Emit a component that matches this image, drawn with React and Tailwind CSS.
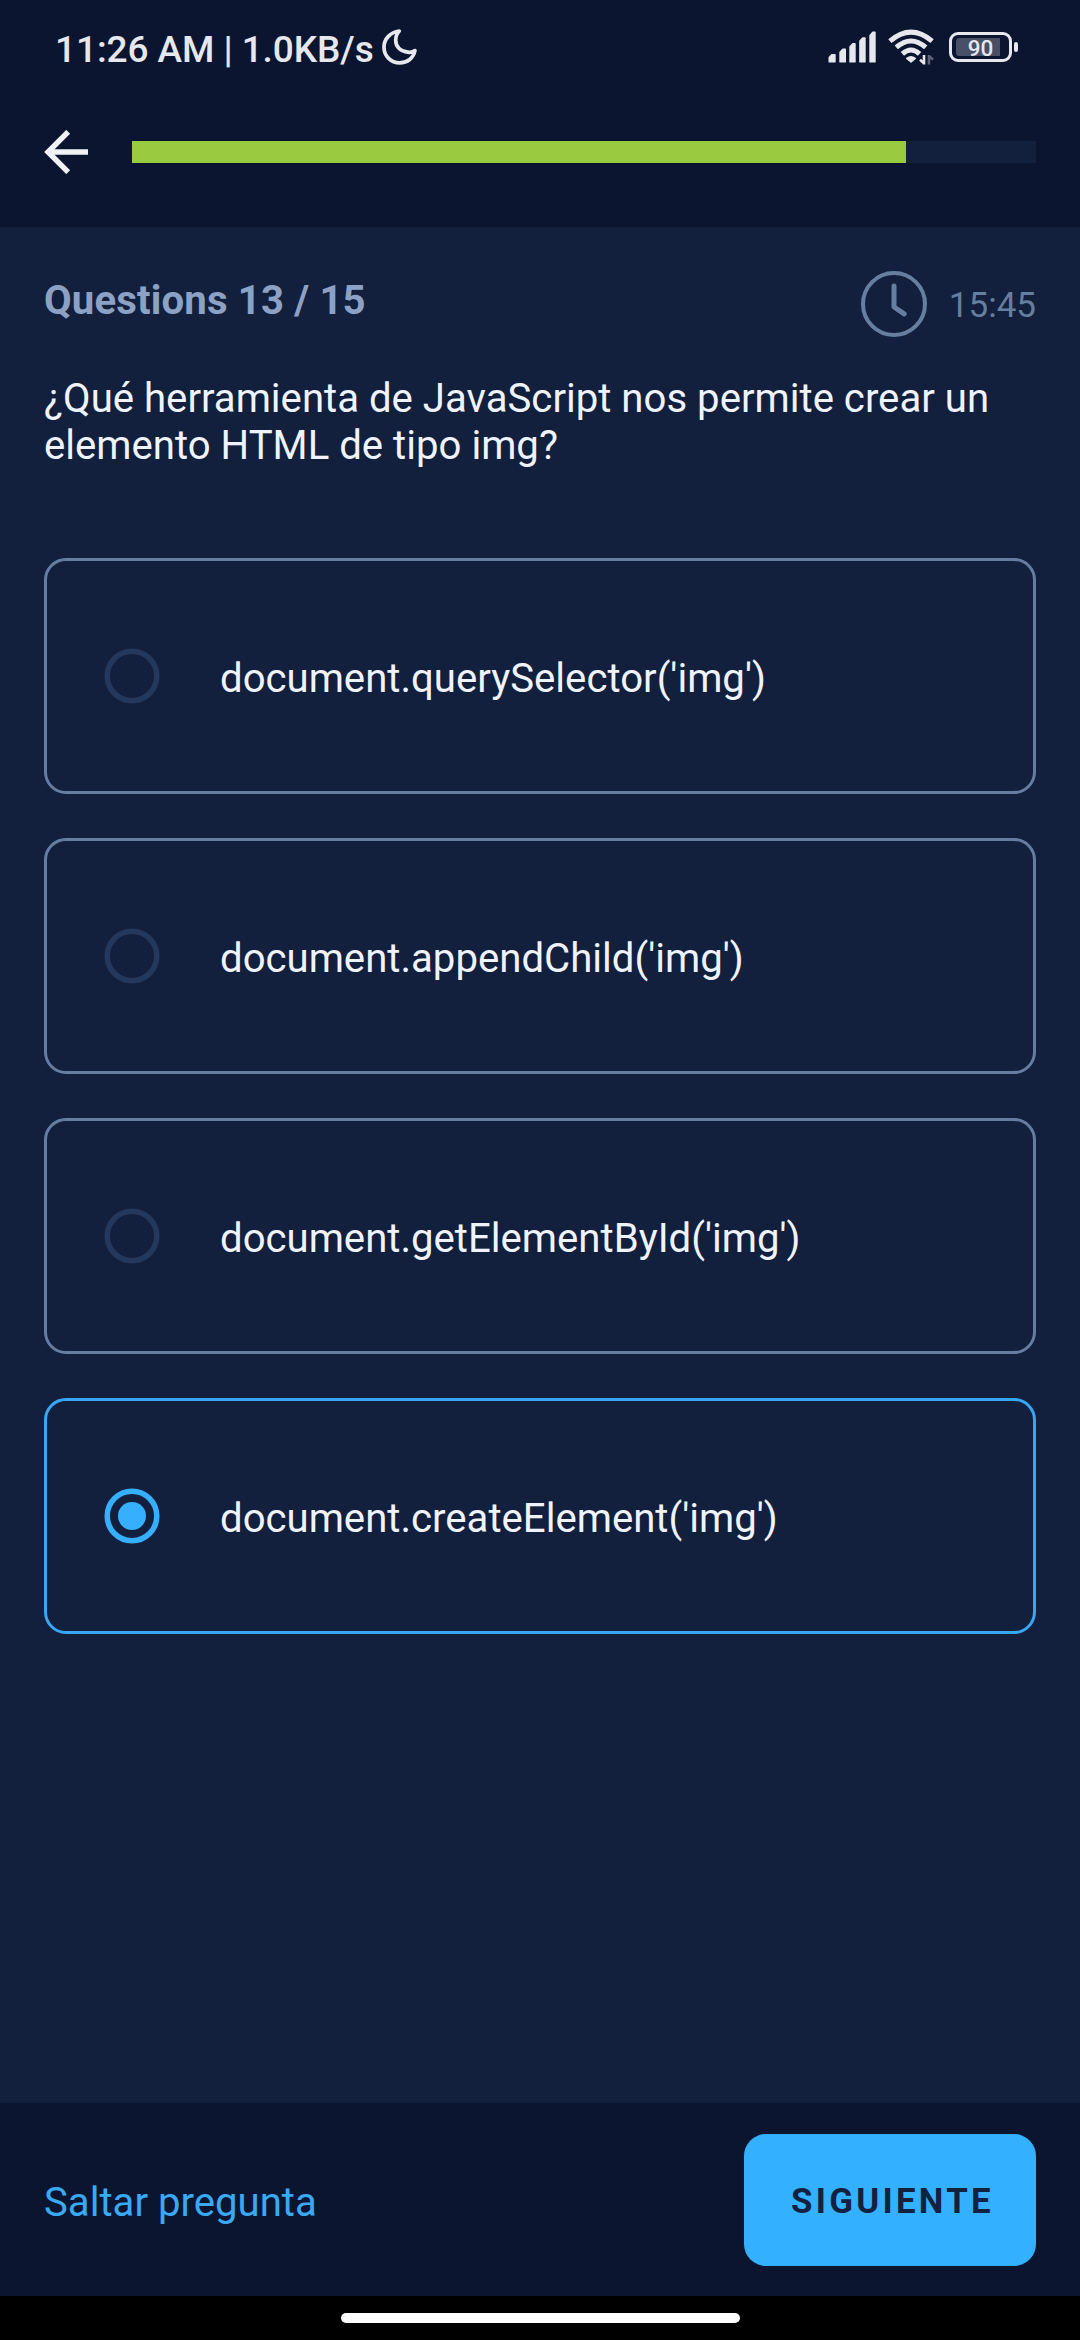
import React from "react";

const OPTIONS = [
  { label: "document.querySelector('img')", selected: false },
  { label: "document.appendChild('img')", selected: false },
  { label: "document.getElementById('img')", selected: false },
  { label: "document.createElement('img')", selected: true },
];

function MoonIcon() {
  return (
    <svg className="ml-2 h-9 w-9" viewBox="0 0 36 36" fill="none" stroke="currentColor" strokeWidth="3.7" strokeLinejoin="round">
      <path d="M17.3 2C8.5 3.2 2 9.8 2 18.2C2 27 9 33.9 17.7 33.9C25.5 33.9 31.5 29 33 21.5C31.5 22.8 28.5 23.6 25.8 23.2C18.8 22.6 13.7 18 13.7 11.3C13.7 7.6 15 4.4 17.3 2Z" />
    </svg>
  );
}

function SignalIcon() {
  return (
    <svg className="h-[34px] w-12" viewBox="0 0 48 34" fill="currentColor" stroke="currentColor" strokeWidth="1.4" strokeLinejoin="round">
      <path d="M1.2 27.6L4 24.6H7V31.9H1.2Z" />
      <path d="M12 22.3L14.8 19.3H17.3V31.9H12Z" />
      <path d="M22 16.8L24.8 13.7H27V31.9H22Z" />
      <path d="M31.9 11L34.7 8H37V31.9H31.9Z" />
      <path d="M42 5.4L44.8 2.2H47V31.9H42Z" />
    </svg>
  );
}

function WifiIcon() {
  return (
    <svg className="ml-[11px] h-9 w-12" viewBox="0 0 48 36" fill="none" stroke="currentColor" strokeWidth="5">
      <path d="M2.9 12.2Q24 -5.8 45.1 12.2" strokeLinejoin="round" />
      <path d="M9.3 18.4Q24 5.6 38.7 18.4" />
      <path d="M15.4 24.8Q24 17.2 32.6 24.8" />
      <path d="M19.8 29.4Q24 26.2 28.2 29.4L24 32.8Z" fill="currentColor" strokeWidth="1.6" strokeLinejoin="round" />
      <path d="M37 26V35.4M37 34.4L33 30.8" strokeWidth="2.6" />
      <path d="M42 35.4V26M42 27L46 30.6" stroke="#5d647a" strokeWidth="2.6" />
    </svg>
  );
}

function Battery() {
  return (
    <div className="ml-[14px] flex items-center gap-0.5">
      <div className="relative flex h-[30px] w-[63px] items-center justify-center rounded-[9px] border-3 border-[#e6e8ed]">
        <span className="absolute top-[3px] left-1 h-[18px] w-11 rounded-l-[3px] bg-[#484f66]" />
        <span className="relative pt-0.5 text-[22.5px] leading-6 font-medium">90</span>
      </div>
      <span className="h-[10px] w-1 rounded-xs bg-[#e6e8ed]" />
    </div>
  );
}

function BackIcon() {
  return (
    <svg className="h-11 w-11" viewBox="0 0 44 44" fill="none" stroke="#eff3f8" strokeWidth="5.4">
      <path d="M24.2 1.8L4 22L24.2 42.2M5 22H44" />
    </svg>
  );
}

function ClockIcon() {
  return (
    <svg className="h-[66px] w-[66px]" viewBox="0 0 66 66" fill="none" stroke="currentColor">
      <circle cx="33" cy="33" r="31" strokeWidth="4" />
      <path d="M33 15V36L43.2 42.8" strokeWidth="5" strokeLinecap="round" strokeLinejoin="round" />
    </svg>
  );
}

function Radio({ selected }) {
  return (
    <svg className={selected ? "h-14 w-14 text-[#37afff]" : "h-14 w-14 text-[#24385b]"} viewBox="0 0 56 56">
      <circle cx="28" cy="28" r="24.8" fill="none" stroke="currentColor" strokeWidth="5.5" />
      {selected && <circle cx="28" cy="28" r="14" fill="currentColor" />}
    </svg>
  );
}

function Option({ label, selected }) {
  return (
    <div
      className={
        selected
          ? "flex h-[236px] items-center rounded-[22px] border-3 border-[#37a7f3] pl-[57px]"
          : "flex h-[236px] items-center rounded-[22px] border-3 border-[#667d9f] pl-[57px]"
      }
    >
      <Radio selected={selected} />
      <span className="ml-[60px] pt-[5px] text-[40.15px] leading-[47px]">{label}</span>
    </div>
  );
}

export default function App() {
  return (
    <div className="flex h-[2340px] w-[1080px] flex-col overflow-hidden bg-[#121f3d] font-['Roboto',sans-serif] text-[#eff3fb]">
      <header className="h-[227px] bg-[#0b1530]">
        <div className="flex h-[94px] items-center justify-between pr-[62px] pl-[55px] text-[#e6e8ed]">
          <div className="flex items-center">
            <span className="pt-[5px] text-[37px] leading-[44px] font-medium tracking-[-0.08px] whitespace-nowrap">11:26 AM | 1.0KB/s</span>
            <MoonIcon />
          </div>
          <div className="flex items-center">
            <SignalIcon />
            <WifiIcon />
            <Battery />
          </div>
        </div>
        <div className="flex h-[116px] items-center gap-11 px-11">
          <BackIcon />
          <div className="h-[22px] flex-1 bg-[#121f3d]">
            <div className="h-full w-[774px] bg-[#9aca3f]" />
          </div>
        </div>
      </header>

      <main className="flex-1 px-11 pt-11">
        <div className="flex h-[66px] items-center justify-between">
          <h1 className="pb-[7px] text-[40.15px] leading-[47px] font-bold tracking-[0.14px] text-[#8ca1c4]">Questions 13 / 15</h1>
          <div className="flex items-center gap-[22px] text-[#667f9f]">
            <ClockIcon />
            <span className="pt-0.5 text-[35px] leading-[41px]">15:45</span>
          </div>
        </div>
        <p className="mt-[38px] text-[40.15px] leading-[47px]">
          ¿Qué herramienta de JavaScript nos permite crear un elemento HTML de tipo img?
        </p>
        <div className="mt-[89px] flex flex-col gap-11">
          {OPTIONS.map((option) => (
            <Option key={option.label} {...option} />
          ))}
        </div>
      </main>

      <footer className="flex h-[193px] items-center justify-between bg-[#0b1530] px-11">
        <button className="pt-[5px] text-[40.15px] leading-[47px] text-[#3aa9f2]">Saltar pregunta</button>
        <button className="flex h-[132px] w-[292px] items-center justify-center rounded-[22px] bg-[#33b0ff] pt-[3px] pl-[5px] text-[34.8px] font-bold tracking-[3.3px] text-[#12213f]">
          SIGUIENTE
        </button>
      </footer>
      <div className="flex h-11 items-center justify-center bg-black">
        <span className="h-[10px] w-[399px] rounded-full bg-white" />
      </div>
    </div>
  );
}
